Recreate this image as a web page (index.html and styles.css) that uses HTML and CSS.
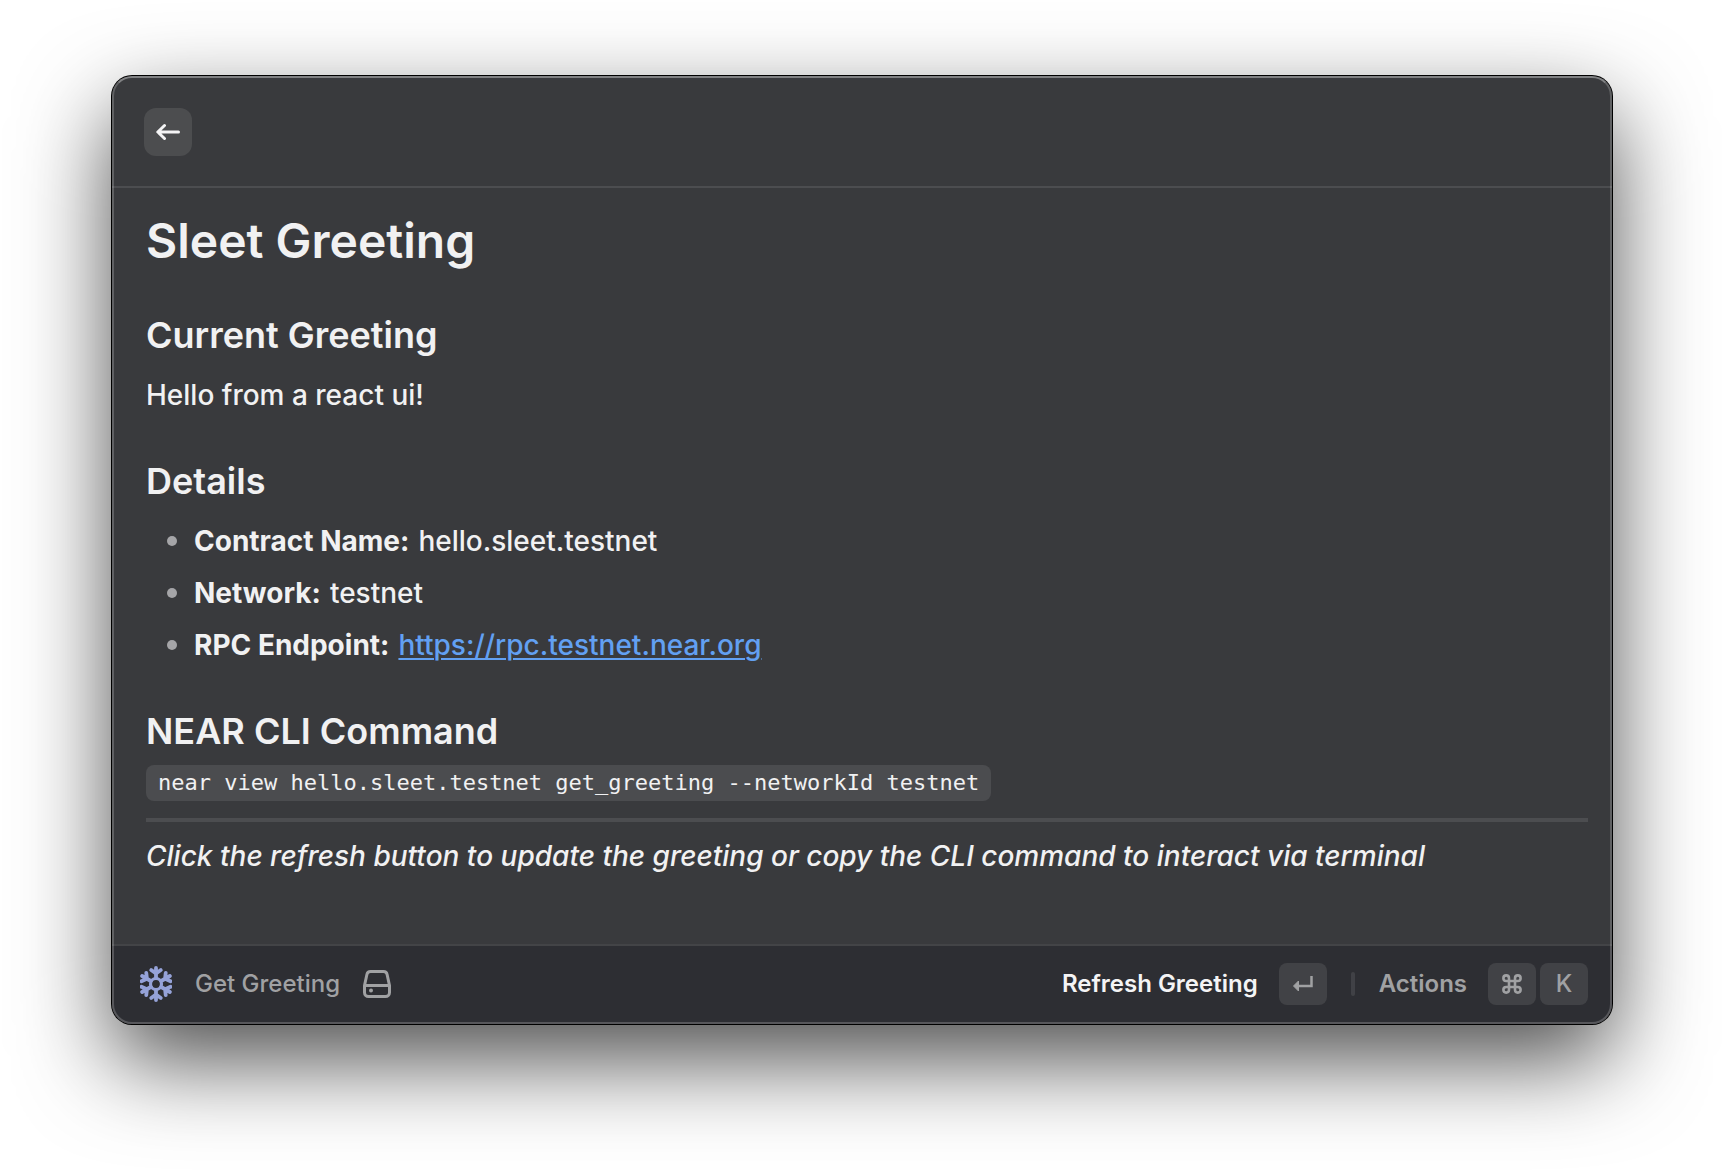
FILE: index.html
```html
<!DOCTYPE html>
<html lang="en">
<head>
<meta charset="utf-8">
<meta name="viewport" content="width=device-width, initial-scale=1">
<title>Sleet Greeting</title>
<link rel="stylesheet" href="styles.css">
</head>
<body>
<div class="window">
  <header class="topbar">
    <button class="back" type="button" aria-label="Back">
      <svg width="24" height="18" viewBox="0 0 24 18" fill="none" stroke="currentColor" stroke-width="3" stroke-linecap="round" stroke-linejoin="round" aria-hidden="true"><path d="M22.500 9H2M8.500 2.500L1.800 9l6.700 6.500"/></svg>
    </button>
  </header>
  <main class="content">
    <h1>Sleet Greeting</h1>
    <h2>Current Greeting</h2>
    <p>Hello from a react ui!</p>
    <h2>Details</h2>
    <ul class="details">
      <li><strong>Contract Name:</strong> hello.sleet.testnet</li>
      <li><strong>Network:</strong> testnet</li>
      <li><strong>RPC Endpoint:</strong> <a href="https://rpc.testnet.near.org">https://rpc.testnet.near.org</a></li>
    </ul>
    <h2>NEAR CLI Command</h2>
    <code class="command">near view hello.sleet.testnet get_greeting --networkId testnet</code>
    <hr>
    <p class="hint"><em>Click the refresh button to update the greeting or copy the CLI command to interact via terminal</em></p>
  </main>
  <footer class="actionbar">
    <div class="source">
      <svg class="snowflake" width="32" height="38" viewBox="-16 -19 32 38" fill="none" stroke="currentColor" stroke-width="3.800" stroke-linecap="round" stroke-linejoin="round" aria-hidden="true">
        <defs><path id="arm" d="M0-6V-16M-4.800-14L0-10.500L4.800-14"/></defs>
        <circle r="5.500" stroke-width="3.200"/>
        <use href="#arm"/><use href="#arm" transform="rotate(60)"/><use href="#arm" transform="rotate(120)"/><use href="#arm" transform="rotate(180)"/><use href="#arm" transform="rotate(240)"/><use href="#arm" transform="rotate(300)"/>
      </svg>
      <span>Get Greeting</span>
      <svg width="28" height="28" viewBox="0 0 28 28" fill="none" stroke="currentColor" stroke-width="3" stroke-linejoin="round" aria-hidden="true"><path d="M7.500 1.500h13c2 0 3.200 1 3.600 3l2.400 11v7a4 4 0 0 1-4 4h-17a4 4 0 0 1-4-4v-7l2.400-11c.4-2 1.600-3 3.600-3zM2 15.500h24"/><circle cx="8" cy="20.500" r="2" fill="currentColor" stroke="none"/></svg>
    </div>
    <div class="actions">
      <button class="action primary" type="button">Refresh Greeting
        <kbd><svg width="22" height="18" viewBox="0 0 22 18" aria-hidden="true"><path d="M19.500 1v10H4" fill="none" stroke="currentColor" stroke-width="2.500"/><path d="M1.500 11l5-5v10z" fill="currentColor" stroke="currentColor" stroke-linejoin="round"/></svg></kbd>
      </button>
      <span class="divider"></span>
      <button class="action" type="button">Actions
        <span class="keys"><kbd><svg width="20" height="20" viewBox="0 0 20 20" fill="none" stroke="currentColor" stroke-width="2.600" aria-hidden="true"><path d="M7 7V4.200A2.800 2.800 0 1 0 4.200 7H15.800A2.800 2.800 0 1 0 13 4.200V15.800A2.800 2.800 0 1 0 15.800 13H4.200A2.800 2.800 0 1 0 7 15.800z"/></svg></kbd><kbd>K</kbd></span>
      </button>
    </div>
  </footer>
</div>
</body>
</html>
```
FILE: styles.css
```css
* {
  box-sizing: border-box;
}

body {
  margin: 0;
  padding: 76px 112px 148px;
  background: #fff;
  color: #f1f1f2;
  font-family: Inter, "Liberation Sans", sans-serif;
  font-size: 28px;
  line-height: 44px;
  font-weight: 500;
}

.window {
  position: relative;
  display: flex;
  flex-direction: column;
  border-radius: 20px;
  background: #393a3d;
  box-shadow: 0 0 0 1px #000, 0 36px 92px rgba(0, 0, 0, 0.7);
}

/* light inner rim drawn over the bars */
.window::after {
  content: "";
  position: absolute;
  inset: 0;
  border: 2px solid rgba(255, 255, 255, 0.2);
  border-top-color: rgba(255, 255, 255, 0.36);
  border-radius: inherit;
  pointer-events: none;
}

.topbar {
  display: flex;
  align-items: center;
  height: 112px;
  padding: 2px 32px 0;
  border-bottom: 2px solid #4c4d50;
}

button {
  border: 0;
  font: inherit;
  cursor: pointer;
}

.back {
  display: grid;
  place-items: center;
  width: 48px;
  height: 48px;
  padding: 0;
  border-radius: 12px;
  background: #4c4d4f;
  color: #f4f4f5;
}

.content {
  padding: 23px 24px 66px 34px;
}

h1,
h2,
p {
  margin: 0;
}

h1 {
  font-size: 48px;
  line-height: 60px;
  font-weight: 600;
}

h2 {
  margin: 42px 0 16px;
  font-size: 36px;
  line-height: 44px;
  font-weight: 600;
}

.details {
  display: grid;
  gap: 8px;
  margin: 0;
  padding: 0;
  list-style: none;
}

.details li {
  display: flex;
  align-items: center;
  gap: 9px;
  padding-left: 21px;
}

.details li::before {
  content: "";
  width: 10px;
  height: 10px;
  margin-right: 8px;
  border-radius: 50%;
  background: #a5a5a8;
}

strong {
  font-weight: 700;
}

a {
  color: #62a0f2;
  text-underline-offset: 3px;
  text-decoration-thickness: 2px;
}

.command {
  display: block;
  width: fit-content;
  margin-top: -4px;
  padding: 0 12px;
  border-radius: 8px;
  background: #4b4c4f;
  font-family: "DejaVu Sans Mono", "Liberation Mono", monospace;
  font-size: 22px;
  line-height: 36px;
}

hr {
  height: 4px;
  margin: 17px 0 12px;
  border: 0;
  background: #4c4d50;
}

.actionbar {
  display: flex;
  align-items: center;
  justify-content: space-between;
  height: 80px;
  padding: 0 24px 2px 28px;
  border-top: 2px solid #434447;
  border-radius: 0 0 20px 20px;
  background: #2d2e33;
  color: #a0a1a3;
  font-size: 24px;
  line-height: 32px;
}

.source,
.actions,
.action {
  display: flex;
  align-items: center;
}

.source {
  gap: 23px;
}

.snowflake {
  color: #95a2d8;
}

.actions {
  gap: 24px;
}

.action {
  gap: 21px;
  padding: 0;
  background: none;
  color: inherit;
  font-weight: 600;
}

.primary {
  color: #f4f4f5;
}

.divider {
  width: 4px;
  height: 24px;
  border-radius: 2px;
  background: #404146;
}

.keys {
  display: flex;
  gap: 4px;
}

kbd {
  display: grid;
  place-items: center;
  width: 48px;
  height: 42px;
  border-radius: 8px;
  background: #414246;
  color: #a0a1a3;
  font: inherit;
  font-weight: 500;
}
```
